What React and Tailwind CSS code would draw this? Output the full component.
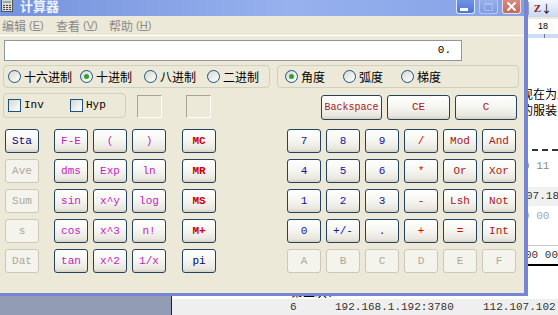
import clsx from 'clsx';

const tones = {
  sta: 'text-[#000080]',
  num: 'text-[#1414a0]',
  fn: 'text-[#c21fc2]',
  mem: 'text-[#cc0000] font-bold',
  op: 'text-[#e00000]',
  bit: 'text-[#a81818]',
  off: 'text-[#aca899]',
};

const Btn = ({ label, tone = 'num', className = 'w-[34px] h-[24px]' }) => {
  const off = tone === 'off';
  return (
    <div
      className={clsx(
        "flex items-center justify-center rounded-[3px] border text-[11px] leading-none font-['Liberation_Mono',monospace]",
        off
          ? 'border-[#cbc8bb] bg-[#f4f3ec]'
          : 'border-[#24425e] bg-[linear-gradient(180deg,#ffffff_0%,#f6f6f2_45%,#e9e7df_85%,#d6d1c4_100%)]',
        tones[tone],
        className
      )}
    >
      {label}
    </div>
  );
};

const Radio = ({ label, checked, className }) => (
  <div className={clsx('flex items-center gap-[3px]', className)}>
    <span className="w-[13px] h-[13px] rounded-full border border-[#1c5180] bg-[linear-gradient(135deg,#d8d8d0,#ffffff)] flex items-center justify-center">
      {checked && <span className="w-[5px] h-[5px] rounded-full bg-[#2aa52a]" />}
    </span>
    <span className="text-[12px] leading-none text-black">{label}</span>
  </div>
);

const Check = ({ label, className }) => (
  <div className={clsx('flex items-center gap-[3px]', className)}>
    <span className="w-[13px] h-[13px] border border-[#1c5180] bg-[linear-gradient(135deg,#d8d8d0,#ffffff)]" />
    <span className="text-[11px] leading-none text-black font-['Liberation_Mono',monospace]">{label}</span>
  </div>
);

const leftCol = [
  ['Sta', 'sta'], ['Ave', 'off'], ['Sum', 'off'], ['s', 'off'], ['Dat', 'off'],
];
const fnKeys = ['F-E', '(', ')', 'dms', 'Exp', 'ln', 'sin', 'x^y', 'log', 'cos', 'x^3', 'n!', 'tan', 'x^2', '1/x'];
const memCol = [
  ['MC', 'mem'], ['MR', 'mem'], ['MS', 'mem'], ['M+', 'mem'], ['pi', 'sta'],
];
const numKeys = [
  ['7', 'num'], ['8', 'num'], ['9', 'num'], ['/', 'op'], ['Mod', 'bit'], ['And', 'bit'],
  ['4', 'num'], ['5', 'num'], ['6', 'num'], ['*', 'op'], ['Or', 'bit'], ['Xor', 'bit'],
  ['1', 'num'], ['2', 'num'], ['3', 'num'], ['-', 'op'], ['Lsh', 'bit'], ['Not', 'bit'],
  ['0', 'num'], ['+/-', 'num'], ['.', 'num'], ['+', 'op'], ['=', 'op'], ['Int', 'bit'],
  ['A', 'off'], ['B', 'off'], ['C', 'off'], ['D', 'off'], ['E', 'off'], ['F', 'off'],
];

const MenuItem = ({ name, k, className }) => (
  <span className={clsx('flex items-center text-[12px] leading-none text-[#8a8a8a]', className)}>
    {name}
    <span className="ml-[3px] font-['Liberation_Sans',sans-serif] text-[11px]">
      (<span className="underline">{k}</span>)
    </span>
  </span>
);

// document lying behind the calculator window
const Backdrop = () => (
  <div className="flex flex-col h-full">
    <div className="h-[17px] flex items-center justify-end pr-[6px] bg-[linear-gradient(180deg,#f3f6fd,#cbd8f1)]">
      <span className="w-px h-[13px] bg-[#8f9fc0] mr-[5px]" />
      <span className="text-[11px] leading-none font-bold text-[#8b1c1c] font-['Liberation_Serif',serif]">Z</span>
      <span className="text-[11px] leading-none text-black">↓</span>
    </div>
    <div className="h-[2px] bg-[#ece9d8]" />
    <div className="h-[15px] bg-white flex items-center justify-end pr-[10px]">
      <span className="text-[9px] leading-none text-black font-['Liberation_Sans',sans-serif]">18</span>
    </div>
    <div className="h-[4px] bg-[#cddbf3] flex justify-end pr-[13px]">
      <span className="w-px h-[4px] bg-[#777]" />
    </div>
    <div className="flex flex-1 min-h-0">
      <div className="w-[172px] shrink-0 bg-[#939cb5] border-r border-[#222]" />
      <div className="flex-1 min-w-0 overflow-hidden flex flex-col whitespace-nowrap text-[12px] text-black">
        <div className="h-[50px]" />
        <div className="h-[16px] leading-[16px] pl-[349px]">现在为止</div>
        <div className="h-[16px] leading-[16px] pl-[349px]">的服装</div>
        <div className="h-[32px]" />
        <div className="h-[2px] border-t-2 border-dashed border-[#333]" />
        <div className="h-[8px]" />
        <div className="h-[16px] leading-[16px] pl-[351px] text-[11px] text-[#8a8a8a] font-['Liberation_Mono',monospace]">0 11</div>
        <div className="h-[13px]" />
        <div className="h-[19px] leading-[19px] pl-[354px] bg-[#f1f1f1] text-[11px] text-[#333] font-['Liberation_Mono',monospace]">07.18</div>
        <div className="h-[2px]" />
        <div className="h-[16px] leading-[16px] pl-[351px] text-[11px] text-[#9aa8c4] font-['Liberation_Mono',monospace]">0 00</div>
        <div className="h-[22px]" />
        <div className="h-[19px] leading-[18px] pl-[353px] border-t border-[#c8c8c8] text-[11px] text-[#333] font-['Liberation_Mono',monospace]">00 00</div>
        <div className="h-[2px] bg-black" />
        <div className="h-[19px]" />
        <div className="h-[15px] leading-[15px] pl-[119px]">第二次：</div>
        <div className="h-[16px] leading-[16px] pl-[118px] bg-[#efefef] flex text-[11px] text-[#333] font-['Liberation_Mono',monospace]">
          <span className="w-[45px] shrink-0">6</span>
          <span className="w-[148px] shrink-0">192.168.1.192:3780</span>
          <span>112.107.102.61</span>
        </div>
      </div>
    </div>
  </div>
);

const CalcIcon = () => (
  <svg width="12" height="13" viewBox="0 0 12 13">
    <rect x="0.5" y="0.5" width="11" height="12" fill="#d9d9d9" stroke="#555" />
    <rect x="2" y="2" width="8" height="2" fill="#8fb38f" />
    <g fill="#444">
      <rect x="2" y="6" width="2" height="1" /><rect x="5" y="6" width="2" height="1" /><rect x="8" y="6" width="2" height="1" />
      <rect x="2" y="8" width="2" height="1" /><rect x="5" y="8" width="2" height="1" /><rect x="8" y="8" width="2" height="1" />
      <rect x="2" y="10" width="2" height="1" /><rect x="5" y="10" width="2" height="1" /><rect x="8" y="10" width="2" height="1" />
    </g>
  </svg>
);

const CalcWindow = () => (
  <div className="w-[528px] h-[296px] bg-[#ece9d8] border-r-[4px] border-b-[3px] border-[#7686d4] flex flex-col">
    {/* title bar */}
    <div className="h-[16px] flex items-start bg-[linear-gradient(90deg,#7592dc,#97b1ee_55%,#86a2e6)]">
      <span className="ml-[1px] -mt-[1px]"><CalcIcon /></span>
      <span className="ml-[7px] -mt-[1px] text-[13px] leading-[13px] font-bold text-[#eef3fd]">计算器</span>
      <div className="ml-auto mr-[3px] flex gap-[4px]">
        <span className="w-[19px] h-[14px] rounded-b-[3px] border border-t-0 border-[#dfe8fb] bg-[linear-gradient(180deg,#6f93e6,#4f74d6)] flex items-end justify-start pl-[3px] pb-[2px]">
          <span className="w-[8px] h-[3px] bg-white" />
        </span>
        <span className="w-[19px] h-[14px] rounded-b-[3px] border border-t-0 border-[#b8c9f1] bg-[linear-gradient(180deg,#97afec,#7e9be3)] flex items-end justify-center pb-[2px]">
          <span className="w-[9px] h-[8px] border border-t-2 border-[#a9bdf0]" />
        </span>
        <span className="w-[19px] h-[14px] rounded-b-[3px] border border-t-0 border-[#f1dcd8] bg-[linear-gradient(180deg,#d98a80,#c26a60)] flex items-center justify-center">
          <svg width="11" height="11" viewBox="0 0 11 11">
            <path d="M1.5 1.5 L9.5 9.5 M9.5 1.5 L1.5 9.5" stroke="#fff" strokeWidth="2" />
          </svg>
        </span>
      </div>
    </div>

    {/* menu */}
    <div className="h-[20px] flex items-center pl-[2px] border-b border-white">
      <MenuItem name="编辑" k="E" className="w-[54px]" />
      <MenuItem name="查看" k="V" className="w-[53px]" />
      <MenuItem name="帮助" k="H" />
    </div>

    {/* display */}
    <div className="mt-[4px] ml-[4px] w-[458px] h-[21px] bg-white border border-[#8e979f] flex items-center justify-end pr-[10px] text-[11px] text-black font-['Liberation_Mono',monospace]">
      0.
    </div>

    {/* radix / angle */}
    <div className="mt-[4px] flex h-[23px]">
      <div className="ml-[3px] w-[267px] rounded-[4px] border border-[#d0d0bf] flex items-center pl-[4px]">
        <Radio label="十六进制" className="w-[72px]" />
        <Radio label="十进制" checked className="w-[64px]" />
        <Radio label="八进制" className="w-[63px]" />
        <Radio label="二进制" />
      </div>
      <div className="ml-[7px] w-[242px] rounded-[4px] border border-[#d0d0bf] flex items-center pl-[7px]">
        <Radio label="角度" checked className="w-[58px]" />
        <Radio label="弧度" className="w-[58px]" />
        <Radio label="梯度" />
      </div>
    </div>

    {/* inv/hyp + backspace row */}
    <div className="mt-[5px] flex items-start h-[27px]">
      <div className="ml-[3px] w-[123px] h-[25px] rounded-[4px] border border-[#d0d0bf] flex items-center pl-[4px]">
        <Check label="Inv" className="w-[62px]" />
        <Check label="Hyp" />
      </div>
      <div className="ml-[11px] mt-[2px] w-[25px] h-[23px] border border-[#a7a493] border-r-white border-b-white" />
      <div className="ml-[24px] mt-[2px] w-[25px] h-[23px] border border-[#a7a493] border-r-white border-b-white" />
      <div className="ml-[110px] mt-[2px] flex gap-[5px]">
        <Btn label="Backspace" tone="bit" className="w-[61px] h-[25px] !text-[10px]" />
        <Btn label="CE" tone="bit" className="w-[63px] h-[25px]" />
        <Btn label="C" tone="bit" className="w-[62px] h-[25px]" />
      </div>
    </div>

    {/* key pad */}
    <div className="mt-[9px] ml-[5px] flex items-start">
      <div className="flex flex-col gap-[6px]">
        {leftCol.map(([l, t]) => <Btn key={l} label={l} tone={t} />)}
      </div>
      <div className="ml-[15px] grid grid-cols-[repeat(3,34px)] gap-x-[5px] gap-y-[6px]">
        {fnKeys.map((l) => <Btn key={l} label={l} tone="fn" />)}
      </div>
      <div className="ml-[16px] flex flex-col gap-[6px]">
        {memCol.map(([l, t]) => <Btn key={l} label={l} tone={t} />)}
      </div>
      <div className="ml-[71px] grid grid-cols-[repeat(6,34px)] gap-x-[5px] gap-y-[6px]">
        {numKeys.map(([l, t], i) => <Btn key={i} label={l} tone={t} />)}
      </div>
    </div>
  </div>
);

export default function App() {
  return (
    <div className="relative w-[558px] h-[315px] overflow-hidden bg-white font-['Noto_Sans_CJK_SC','Liberation_Sans',sans-serif]">
      <Backdrop />
      <div className="absolute left-0 top-0">
        <CalcWindow />
      </div>
    </div>
  );
}
